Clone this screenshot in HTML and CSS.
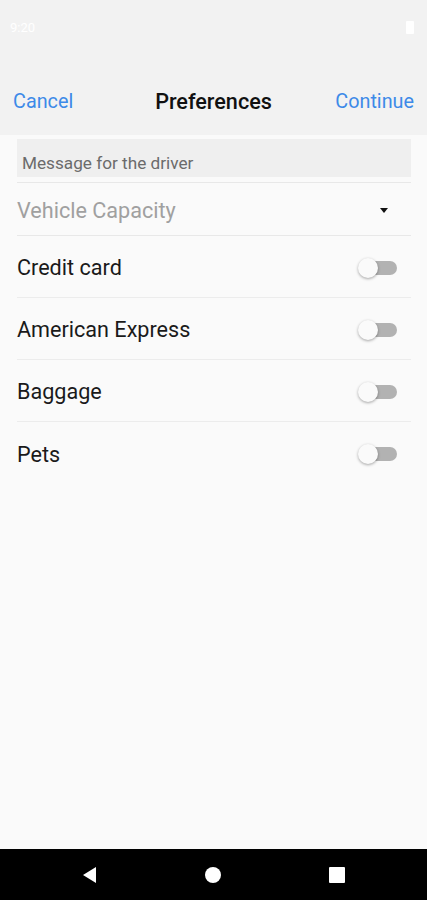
FILE: index.html
```html
<!DOCTYPE html>
<html lang="en">
<head>
    <meta charset="UTF-8">
    <title>Preferences</title>
    <meta name="viewport" content="width=device-width, initial-scale=1.0">
    <link rel="stylesheet" href="styles.css">
</head>
<body>
    <div class="screen">
        <div class="status-bar">
            <span class="time">9:20</span>
            <span class="battery"></span>
        </div>
        <div class="top-bar">
            <span class="link">Cancel</span>
            <span class="title">Preferences</span>
            <span class="link right">Continue</span>
        </div>
        <div class="content">
            <div class="message-wrap">
                <div class="message-box">Message for the driver</div>
            </div>
            <div class="select-row">
                <span class="placeholder">Vehicle Capacity</span>
                <span class="caret"></span>
            </div>
            <div class="option-row">
                <span>Credit card</span>
                <span class="switch"><span class="thumb"></span></span>
            </div>
            <div class="option-row">
                <span>American Express</span>
                <span class="switch"><span class="thumb"></span></span>
            </div>
            <div class="option-row">
                <span>Baggage</span>
                <span class="switch"><span class="thumb"></span></span>
            </div>
            <div class="option-row last">
                <span>Pets</span>
                <span class="switch"><span class="thumb"></span></span>
            </div>
        </div>
        <div class="nav-bar">
            <svg width="20" height="20" viewBox="0 0 20 20"><path d="M16 2 L16 18 L3 10 Z" fill="#fff"/></svg>
            <svg width="20" height="20" viewBox="0 0 20 20"><circle cx="10" cy="10" r="8" fill="#fff"/></svg>
            <svg width="20" height="20" viewBox="0 0 20 20"><rect x="2" y="2" width="16" height="16" rx="1" fill="#fff"/></svg>
        </div>
    </div>
</body>
</html>
```

FILE: styles.css
```css
body {
    margin: 0;
    font-family: Roboto, 'Noto Sans', Arial, sans-serif;
    background: #fafafa;
    color: #1a1a1a;
}
.screen {
    display: flex;
    flex-direction: column;
    height: 900px;
}
.status-bar {
    height: 50px;
    background: #f2f2f2;
    display: flex;
    align-items: center;
    justify-content: space-between;
    padding: 4px 10px 0 10px;
    box-sizing: border-box;
}
.status-bar .time {
    color: #fff;
    font-size: 13px;
}
.status-bar .battery {
    width: 8px;
    height: 13px;
    background: #fff;
    border-radius: 1px;
    margin-right: 3px;
}
.top-bar {
    height: 85px;
    background: #f2f2f2;
    display: grid;
    grid-template-columns: 1fr auto 1fr;
    align-items: center;
    padding: 17px 13px 0 13px;
    box-sizing: border-box;
}
.top-bar .link {
    color: #3d8ae8;
    font-size: 19.8px;
}
.top-bar .link.right {
    text-align: right;
}
.top-bar .title {
    font-size: 21.6px;
    font-weight: 500;
    color: #111;
}
.content {
    flex: 1;
    padding: 4px 16px 0 17px;
}
.message-wrap {
    padding-bottom: 5px;
    border-bottom: 1px solid #e8e8e8;
}
.message-box {
    height: 38px;
    background: #efefef;
    display: flex;
    align-items: center;
    padding: 9px 5px 0 5px;
    box-sizing: border-box;
    font-size: 17.2px;
    color: #6b6b6b;
}
.select-row {
    height: 53px;
    display: flex;
    align-items: center;
    justify-content: space-between;
    border-bottom: 1px solid #e8e8e8;
    padding-top: 2px;
    box-sizing: border-box;
}
.select-row .placeholder {
    font-size: 21.6px;
    color: #a0a0a0;
}
.select-row .caret {
    width: 0;
    height: 0;
    border-left: 4px solid transparent;
    border-right: 4px solid transparent;
    border-top: 5px solid #111;
    margin-right: 23px;
}
.option-row {
    height: 62px;
    display: flex;
    align-items: center;
    justify-content: space-between;
    border-bottom: 1px solid #ececec;
    padding-top: 2px;
    box-sizing: border-box;
    font-size: 21.6px;
    color: #1a1a1a;
}
.option-row.last {
    border-bottom: none;
}
.switch {
    position: relative;
    width: 36px;
    height: 14px;
    background: #b2b2b2;
    border-radius: 7px;
    margin-right: 14px;
}
.switch .thumb {
    position: absolute;
    left: -3px;
    top: -3px;
    width: 20px;
    height: 20px;
    border-radius: 50%;
    background: #fafafa;
    box-shadow: 0 1px 3px rgba(0,0,0,0.35);
}
.nav-bar {
    height: 51px;
    background: #000;
    display: flex;
    align-items: center;
    justify-content: space-around;
    padding: 0 28px;
}
```
